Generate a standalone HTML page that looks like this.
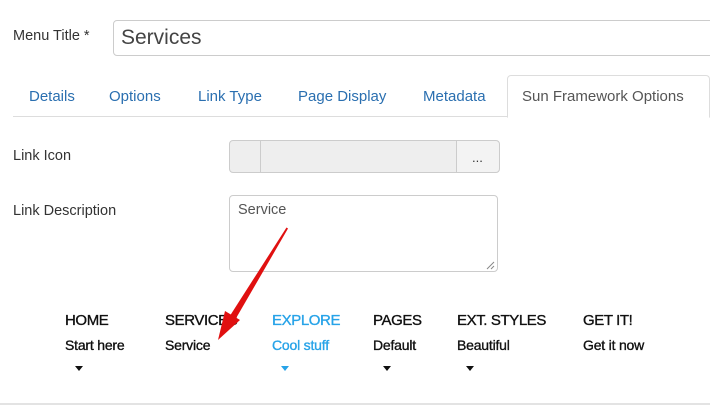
<!DOCTYPE html>
<html><head><meta charset="utf-8"><style>
body{margin:0;width:710px;height:407px;background:#fff;position:relative;overflow:hidden;font-family:"Liberation Sans",sans-serif;color:#333}
.a{position:absolute;white-space:nowrap}
.tab{position:absolute;top:88px;font-size:15px;color:#2a6fb0}
.m{position:absolute;font-family:"Liberation Sans",sans-serif;font-size:14.5px;color:#111;-webkit-text-stroke:0.35px currentColor}
.m b{display:block;font-weight:normal;font-size:15px;letter-spacing:-0.4px}
.m span{display:block;margin-top:8px;font-size:14px;letter-spacing:-0.2px}
.tri{position:absolute;top:366px;width:0;height:0;border-left:4.5px solid transparent;border-right:4.5px solid transparent;border-top:5px solid #111}
</style></head><body>
<div class="a" style="left:13px;top:28px;font-size:14.5px">Menu Title *</div>
<div class="a" style="left:113px;top:20px;width:620px;height:36px;border:1px solid #ccc;border-radius:4px;box-sizing:border-box"></div>
<div class="a" style="left:121px;top:26px;font-size:21px;color:#444">Services</div>

<div class="a" style="left:13px;top:116px;width:697px;height:1px;background:#ddd"></div>
<div class="a" style="left:507px;top:75px;width:203px;height:43px;border:1px solid #ddd;border-bottom:1px solid #fff;border-radius:4px 4px 0 0;box-sizing:border-box;background:#fff"></div>
<div class="tab" style="left:29px">Details</div>
<div class="tab" style="left:109px">Options</div>
<div class="tab" style="left:198px">Link Type</div>
<div class="tab" style="left:298px">Page Display</div>
<div class="tab" style="left:423px">Metadata</div>
<div class="tab" style="left:522px;color:#555">Sun Framework Options</div>

<div class="a" style="left:13px;top:148px;font-size:14.5px">Link Icon</div>
<div class="a" style="left:229px;top:140px;width:271px;height:33px;border:1px solid #ccc;border-radius:4px;box-sizing:border-box;background:#eee"></div>
<div class="a" style="left:260px;top:141px;width:1px;height:31px;background:#ccc"></div>
<div class="a" style="left:456px;top:141px;width:1px;height:31px;background:#ccc"></div>
<div class="a" style="left:457px;top:141px;width:42px;height:31px;background:#f3f3f3;border-radius:0 4px 4px 0"></div>
<div class="a" style="left:472px;top:150px;font-size:13px">...</div>

<div class="a" style="left:13px;top:203px;font-size:14.5px">Link Description</div>
<div class="a" style="left:229px;top:195px;width:269px;height:77px;border:1px solid #ccc;border-radius:4px;box-sizing:border-box"></div>
<div class="a" style="left:238px;top:202px;font-size:14.5px;color:#555">Service</div>
<svg class="a" style="left:486px;top:261px" width="9" height="9"><path d="M1 8L8 1M5 8L8 5" stroke="#888" stroke-width="1"/></svg>

<div class="m" style="left:65px;top:312px"><b>HOME</b><span>Start here</span></div>
<div class="m" style="left:165px;top:312px"><b>SERVICES</b><span>Service</span></div>
<div class="m" style="left:272px;top:312px;color:#27a3e8"><b>EXPLORE</b><span>Cool stuff</span></div>
<div class="m" style="left:373px;top:312px"><b>PAGES</b><span>Default</span></div>
<div class="m" style="left:457px;top:312px"><b>EXT. STYLES</b><span>Beautiful</span></div>
<div class="m" style="left:583px;top:312px"><b>GET IT!</b><span>Get it now</span></div>
<div class="tri" style="left:75px"></div>
<div class="tri" style="left:281px;border-top-color:#27a3e8"></div>
<div class="tri" style="left:383px"></div>
<div class="tri" style="left:466px"></div>

<svg class="a" style="left:0;top:0" width="710" height="407">
<path d="M286.5 227.5L288 228.5L235 320L229.5 316.5Z" fill="#e01010"/>
<path d="M218 340L225 311L240 320Z" fill="#e01010"/>
</svg>
<div class="a" style="left:0;top:403px;width:710px;height:2px;background:#e3e3e3"></div>
</body></html>
